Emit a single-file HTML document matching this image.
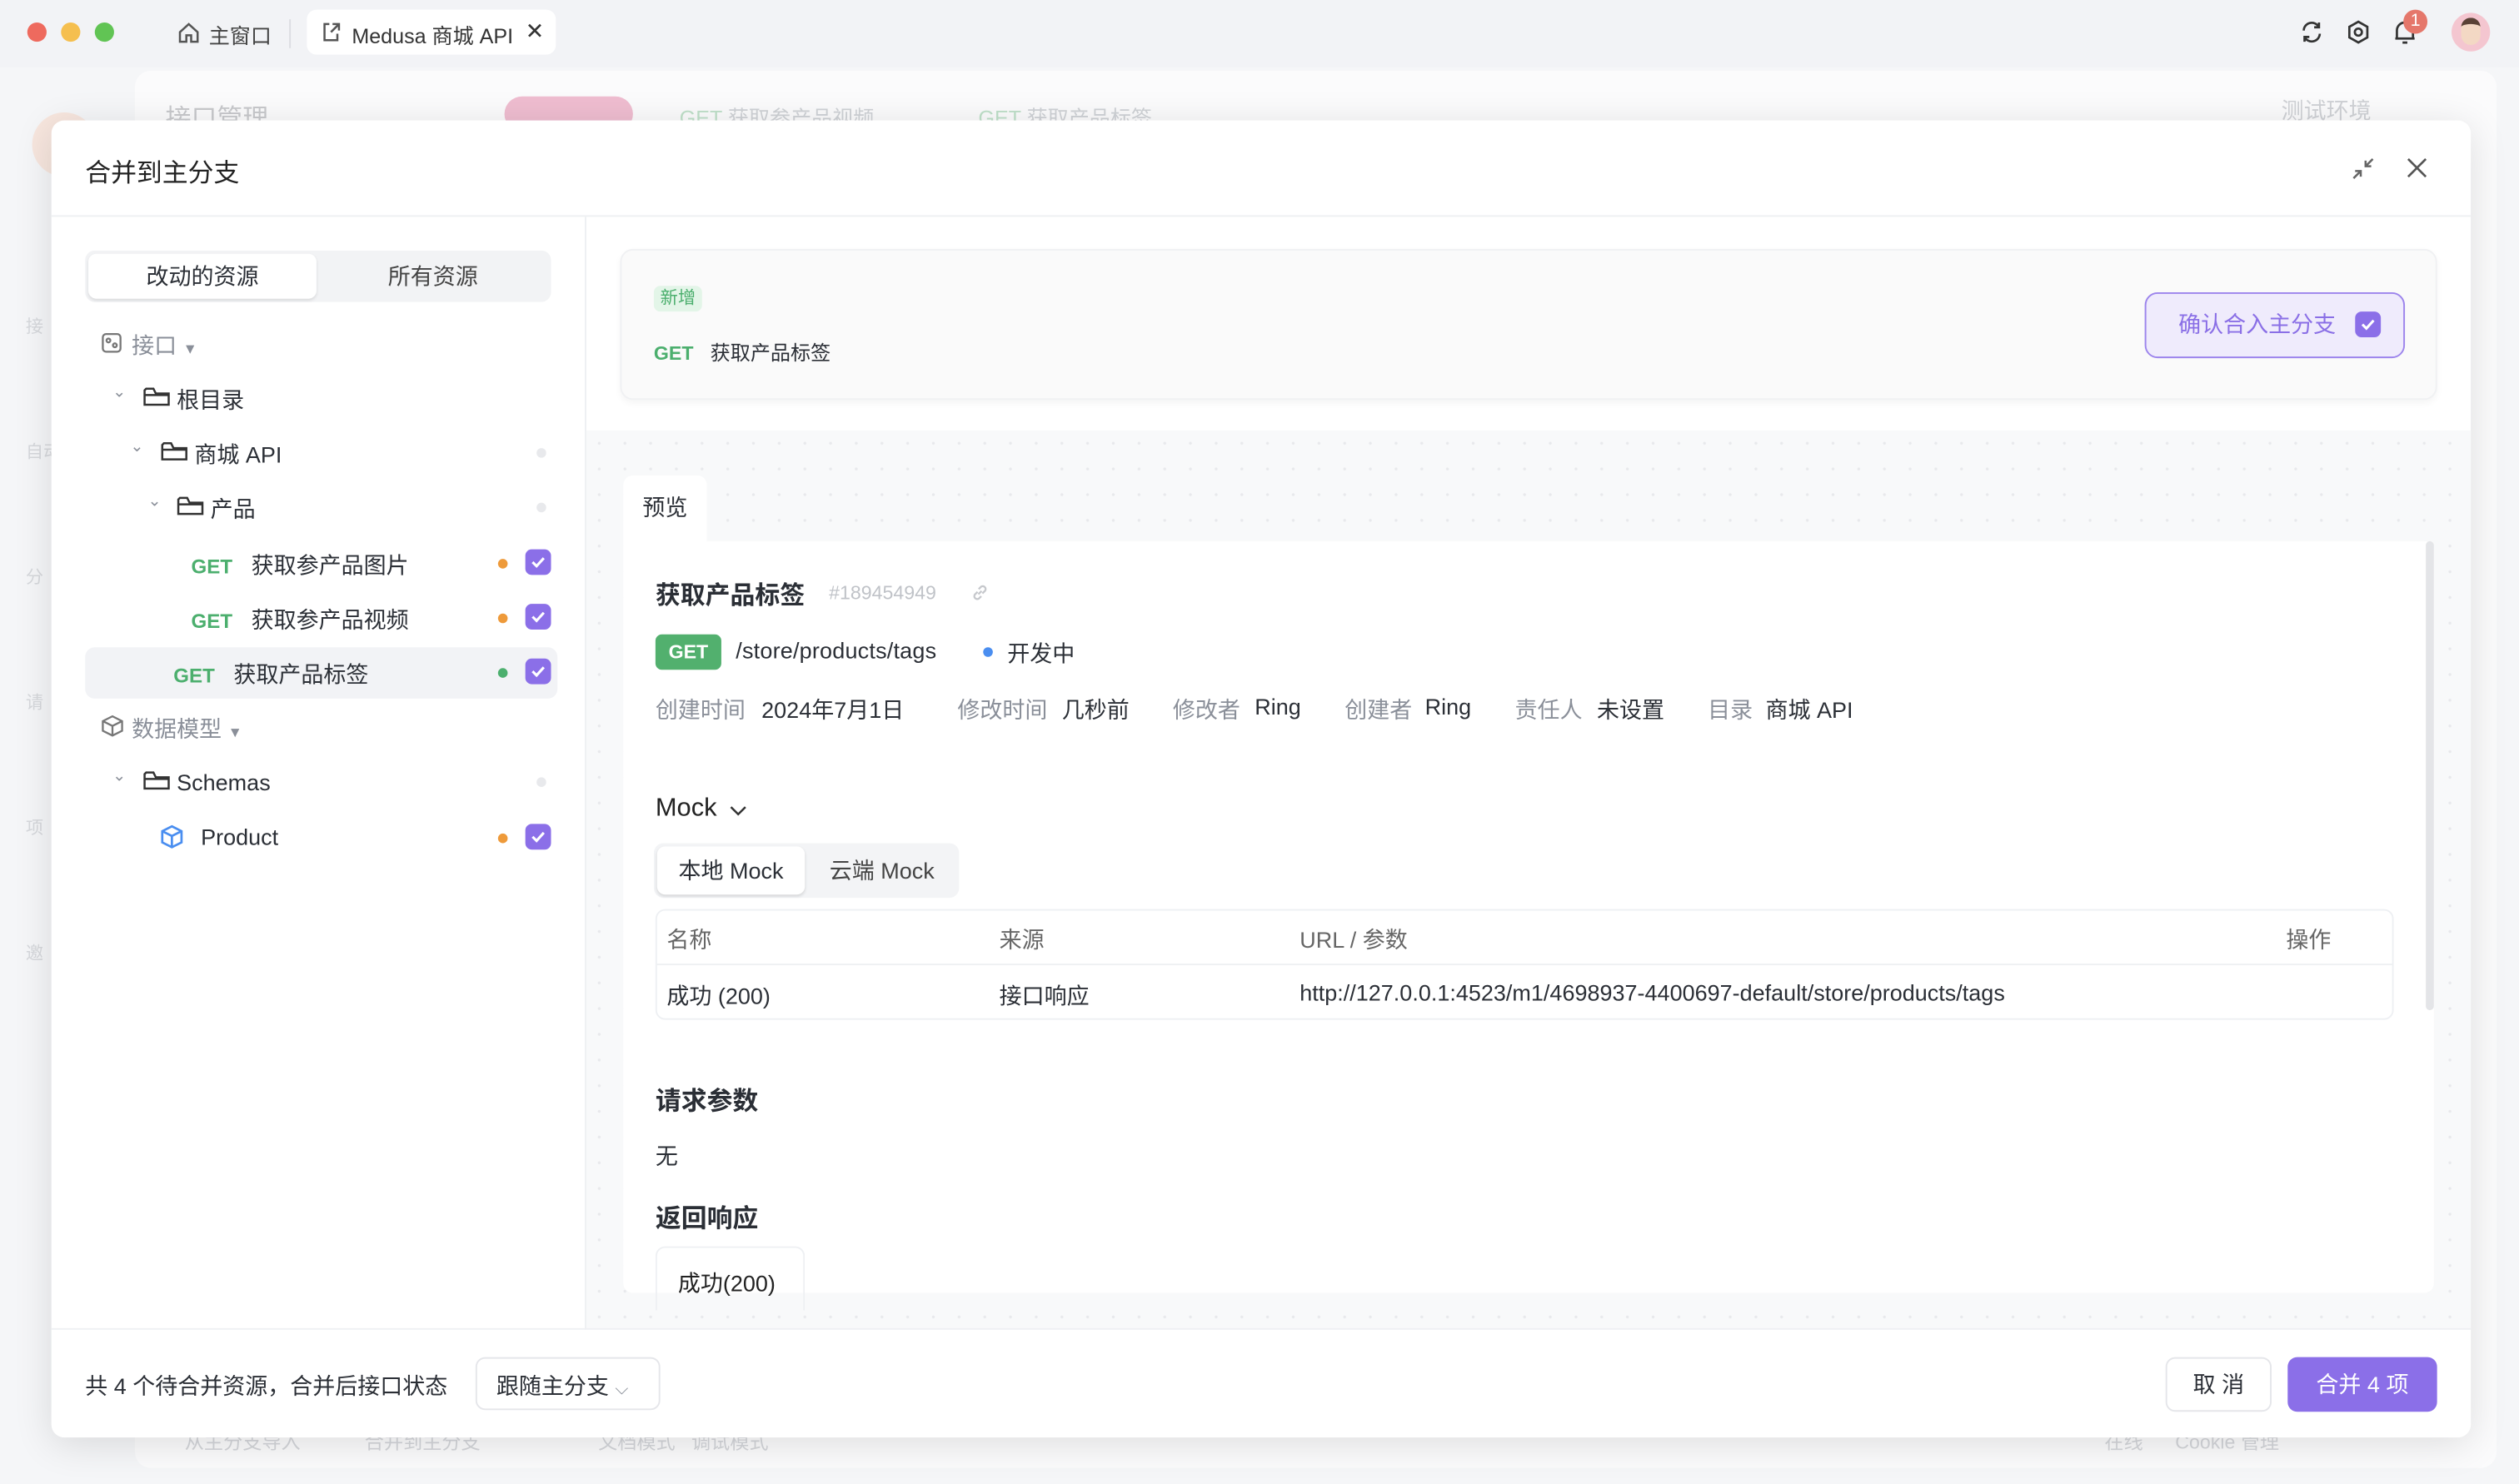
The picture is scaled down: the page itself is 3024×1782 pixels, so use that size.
<!DOCTYPE html>
<html><head><meta charset="utf-8">
<style>
*{box-sizing:border-box;margin:0;padding:0}
html,body{width:3024px;height:1782px;overflow:hidden;background:#f2f3f6}
#w{position:absolute;left:0;top:0;width:1568px;height:924px;transform:scale(1.92857);transform-origin:0 0;font-family:"Liberation Sans","Noto Sans CJK SC",sans-serif;color:#2b2f36;font-size:14px}
.a{position:absolute}
.get{color:#4caf6e;font-weight:bold;font-size:12.5px}
.cb{position:absolute;width:16px;height:16px;border-radius:4px;background:#8b6fe8}
.cb svg{position:absolute;left:3px;top:3px}
.dot{position:absolute;width:6px;height:6px;border-radius:3px}
.g{color:#8a8f99}
.m{position:absolute;top:0;white-space:nowrap}
</style></head><body><div id="w">
<!-- title bar -->
<div class="a" style="left:17px;top:14px;width:12px;height:12px;border-radius:6px;background:#ee6a5e"></div>
<div class="a" style="left:38px;top:14px;width:12px;height:12px;border-radius:6px;background:#f5bf4f"></div>
<div class="a" style="left:59px;top:14px;width:12px;height:12px;border-radius:6px;background:#61c454"></div>
<svg class="a" style="left:110px;top:13px" width="15" height="15" viewBox="0 0 15 15"><path d="M2 7L7.5 2L13 7V13H9V9H6V13H2Z" fill="none" stroke="#555" stroke-width="1.3"/></svg>
<div class="a" style="left:130px;top:12px;font-size:13px;color:#444">主窗口</div>
<div class="a" style="left:180px;top:12px;width:1px;height:18px;background:#dcdde2"></div>
<div class="a" style="left:191px;top:6px;width:155px;height:28px;background:#fff;border-radius:6px"></div>
<svg class="a" style="left:199px;top:13px" width="14" height="14" viewBox="0 0 14 14"><path d="M6 2H3V12H11V8M8 2H12V6M12 2L7 7" fill="none" stroke="#555" stroke-width="1.3"/></svg>
<div class="a" style="left:219px;top:12px;font-size:13px;color:#333">Medusa 商城 API</div>
<div class="a" style="left:327px;top:11px;font-size:14px;color:#333">✕</div>
<svg class="a" style="left:1431px;top:12px" width="16" height="16" viewBox="0 0 16 16" fill="none" stroke="#333" stroke-width="1.4"><path d="M3 7A5 5 0 0 1 12.5 5M13 9A5 5 0 0 1 3.5 11M12.5 2V5H9.5M3.5 14V11H6.5"/></svg>
<svg class="a" style="left:1460px;top:12px" width="16" height="16" viewBox="0 0 16 16" fill="none" stroke="#333" stroke-width="1.4"><path d="M8 1.5L13.6 4.7V11.3L8 14.5L2.4 11.3V4.7Z"/><circle cx="8" cy="8" r="2.2"/></svg>
<svg class="a" style="left:1489px;top:11px" width="16" height="18" viewBox="0 0 16 18" fill="none" stroke="#333" stroke-width="1.4"><path d="M3 13V8A5 5 0 0 1 13 8V13H2H14M6.5 15.5H9.5"/></svg>
<div class="a" style="left:1496px;top:6px;width:15px;height:15px;border-radius:8px;background:#e5776b;color:#fff;font-size:11px;text-align:center;line-height:15px">1</div>
<div class="a" style="left:1526px;top:8px;width:24px;height:24px;border-radius:12px;background:#f4c6d0"></div>
<div class="a" style="left:1532px;top:11px;width:12px;height:17px;border-radius:6px;background:#f3d8c4;border-top:4px solid #5a4236"></div>
<!-- background app faded -->
<div class="a" style="left:0;top:42px;width:1568px;height:882px;background:#f5f6f8"></div>
<div class="a" style="left:84px;top:44px;width:1470px;height:870px;background:#fbfbfc;border-radius:10px"></div>
<div class="a" style="left:103px;top:60px;font-size:16px;color:#c8c9cc">接口管理</div>
<div class="a" style="left:314px;top:60px;width:80px;height:22px;border-radius:11px;background:#efbdd0"></div>
<div class="a" style="left:423px;top:63px;font-size:13px;color:#cfd2d6"><span style="color:#bfe0c9">GET</span> 获取参产品视频</div>
<div class="a" style="left:609px;top:63px;font-size:13px;color:#cfd2d6"><span style="color:#bfe0c9">GET</span> 获取产品标签</div>
<div class="a" style="left:1420px;top:59px;font-size:14px;color:#d0d2d6">测试环境</div>
<div class="a" style="left:20px;top:70px;width:40px;height:40px;border-radius:20px;background:#f7e6de"></div>
<div class="a" style="left:16px;top:165px;font-size:11px;color:#d6d8dc;line-height:78px">接<br>自动<br>分<br>请<br>项<br>邀</div>
<div class="a" style="left:115px;top:889px;font-size:12px;color:#d4d6da">从主分支导入 &nbsp;&nbsp;&nbsp;&nbsp;&nbsp;&nbsp;&nbsp;&nbsp;&nbsp;&nbsp; 合并到主分支 &nbsp;&nbsp;&nbsp;&nbsp;&nbsp;&nbsp;&nbsp;&nbsp;&nbsp;&nbsp;&nbsp;&nbsp;&nbsp;&nbsp;&nbsp;&nbsp;&nbsp;&nbsp;&nbsp;&nbsp; 文档模式 &nbsp; 调试模式</div>
<div class="a" style="left:1310px;top:889px;font-size:12px;color:#d4d6da">在线 &nbsp;&nbsp;&nbsp;&nbsp; Cookie 管理</div>
<!-- modal -->
<div class="a" style="left:32px;top:75px;width:1506px;height:820px;background:#fff;border-radius:8px;box-shadow:0 4px 24px rgba(0,0,0,.12);overflow:hidden">
 <div class="a" style="left:21px;top:19px;font-size:16px;color:#222">合并到主分支</div>
 <svg class="a" style="left:1432px;top:23px" width="14" height="14" viewBox="0 0 14 14" fill="none" stroke="#666" stroke-width="1.3"><path d="M13 1L8.5 5.5M8.5 2V5.5H12M1 13L5.5 8.5M2 8.5H5.5V12"/></svg>
 <svg class="a" style="left:1466px;top:23px" width="13" height="13" viewBox="0 0 13 13" stroke="#555" stroke-width="1.4"><path d="M1 1L12 12M12 1L1 12"/></svg>
 <div class="a" style="left:0;top:59px;width:1506px;height:1px;background:#eef0f3"></div>
 <!-- left pane -->
 <div class="a" style="left:332px;top:60px;width:1px;height:693px;background:#eef0f3"></div>
 <div class="a" style="left:21px;top:81px;width:290px;height:32px;border-radius:6px;background:#f2f3f5"></div>
 <div class="a" style="left:23px;top:83px;width:142px;height:28px;border-radius:5px;background:#fff;box-shadow:0 1px 2px rgba(0,0,0,.1);text-align:center;line-height:28px">改动的资源</div>
 <div class="a" style="left:166px;top:83px;width:143px;height:28px;text-align:center;line-height:28px;color:#444">所有资源</div>
 <div class="a" style="left:21px;top:328px;width:294px;height:32px;border-radius:6px;background:#f2f3f6"></div>
 <svg class="a" style="left:31px;top:132px" width="13" height="13" viewBox="0 0 13 13" fill="none" stroke="#777" stroke-width="1.2"><rect x="1" y="1" width="11" height="11" rx="2"/><circle cx="4.5" cy="5" r="1.2"/><circle cx="8.5" cy="8" r="1.2"/></svg>
 <div class="a g" style="left:50px;top:130px">接口 <span style="font-size:9px">▼</span></div>
 <svg class="a" style="left:31px;top:370px" width="14" height="14" viewBox="0 0 14 14" fill="none" stroke="#777" stroke-width="1.2"><path d="M7 1L13 4V10L7 13L1 10V4ZM1 4L7 7L13 4M7 7V13"/></svg>
 <div class="a g" style="left:50px;top:369px">数据模型 <span style="font-size:9px">▼</span></div>
 <!-- folders -->
 <div class="a g" style="left:38px;top:164px;font-size:10px">⌄</div>
 <div class="a g" style="left:49px;top:198px;font-size:10px">⌄</div>
 <div class="a g" style="left:60px;top:232px;font-size:10px">⌄</div>
 <div class="a g" style="left:38px;top:403px;font-size:10px">⌄</div>
 <svg class="a" style="left:57px;top:165px" width="17" height="14" viewBox="0 0 17 14" fill="none" stroke="#333" stroke-width="1.3"><path d="M1 3V12H16V5H8L6.5 2H2ZM1 6H16"/></svg>
 <div class="a" style="left:78px;top:164px">根目录</div>
 <svg class="a" style="left:68px;top:199px" width="17" height="14" viewBox="0 0 17 14" fill="none" stroke="#333" stroke-width="1.3"><path d="M1 3V12H16V5H8L6.5 2H2ZM1 6H16"/></svg>
 <div class="a" style="left:89px;top:198px">商城 API</div>
 <svg class="a" style="left:78px;top:233px" width="17" height="14" viewBox="0 0 17 14" fill="none" stroke="#333" stroke-width="1.3"><path d="M1 3V12H16V5H8L6.5 2H2ZM1 6H16"/></svg>
 <div class="a" style="left:99px;top:232px">产品</div>
 <svg class="a" style="left:57px;top:404px" width="17" height="14" viewBox="0 0 17 14" fill="none" stroke="#333" stroke-width="1.3"><path d="M1 3V12H16V5H8L6.5 2H2ZM1 6H16"/></svg>
 <div class="a" style="left:78px;top:404px">Schemas</div>
 <div class="a" style="left:87px;top:267px"><span class="get">GET</span>&nbsp;&nbsp; 获取参产品图片</div>
 <div class="a" style="left:87px;top:301px"><span class="get">GET</span>&nbsp;&nbsp; 获取参产品视频</div>
 <div class="a" style="left:76px;top:335px"><span class="get">GET</span>&nbsp;&nbsp; 获取产品标签</div>
 <svg class="a" style="left:67px;top:438px" width="16" height="16" viewBox="0 0 16 16" fill="none" stroke="#4a8ef0" stroke-width="1.4"><path d="M8 1.5L14 4.5V11.5L8 14.5L2 11.5V4.5ZM2 4.5L8 7.5L14 4.5M8 7.5V14.5"/></svg>
 <div class="a" style="left:93px;top:438px">Product</div>
 <div class="dot" style="left:302px;top:204px;background:#e8e9ec"></div>
 <div class="dot" style="left:302px;top:238px;background:#e8e9ec"></div>
 <div class="dot" style="left:302px;top:409px;background:#e8e9ec"></div>
 <div class="dot" style="left:278px;top:273px;background:#ee9a3a"></div>
 <div class="dot" style="left:278px;top:307px;background:#ee9a3a"></div>
 <div class="dot" style="left:278px;top:341px;background:#4caf6e"></div>
 <div class="dot" style="left:278px;top:444px;background:#ee9a3a"></div>
 <div class="cb" style="left:295px;top:267px"><svg width="10" height="10" viewBox="0 0 10 10"><path d="M1.5 5L4 7.5L8.5 2.5" fill="none" stroke="#fff" stroke-width="1.6"/></svg></div>
 <div class="cb" style="left:295px;top:301px"><svg width="10" height="10" viewBox="0 0 10 10"><path d="M1.5 5L4 7.5L8.5 2.5" fill="none" stroke="#fff" stroke-width="1.6"/></svg></div>
 <div class="cb" style="left:295px;top:335px"><svg width="10" height="10" viewBox="0 0 10 10"><path d="M1.5 5L4 7.5L8.5 2.5" fill="none" stroke="#fff" stroke-width="1.6"/></svg></div>
 <div class="cb" style="left:295px;top:438px"><svg width="10" height="10" viewBox="0 0 10 10"><path d="M1.5 5L4 7.5L8.5 2.5" fill="none" stroke="#fff" stroke-width="1.6"/></svg></div>
 <!-- right pane -->
 <div class="a" style="left:354px;top:80px;width:1131px;height:94px;background:#fafafa;border:1px solid #f0f1f3;border-radius:8px;box-shadow:0 2px 4px rgba(0,0,0,.04)"></div>
 <div class="a" style="left:375px;top:103px;padding:0 4px;height:16px;line-height:16px;border-radius:4px;background:#e3f5e8;color:#4caf6e;font-size:11px">新增</div>
 <div class="a" style="left:375px;top:134px;font-size:12.5px"><span class="get" style="font-size:12px">GET</span>&nbsp;&nbsp; 获取产品标签</div>
 <div class="a" style="left:1303px;top:107px;width:162px;height:41px;border:1.5px solid #9c84ec;border-radius:8px;background:#efebfc;color:#8a6fe6;font-size:14px;line-height:38px;padding-left:20px">确认合入主分支</div>
 <div class="cb" style="left:1434px;top:119px"><svg width="10" height="10" viewBox="0 0 10 10"><path d="M1.5 5L4 7.5L8.5 2.5" fill="none" stroke="#fff" stroke-width="1.6"/></svg></div>
 <div class="a" style="left:333px;top:193px;width:1173px;height:560px;background:#f8f9fa;background-image:radial-gradient(#e8e9ec 0.8px,transparent 1px);background-size:16px 16px"></div>
 <div class="a" style="left:356px;top:221px;width:52px;height:42px;background:#fff;border-radius:6px 6px 0 0;text-align:center;line-height:40px;font-size:14px">预览</div>
 <div class="a" style="left:356px;top:262px;width:1127px;height:468px;background:#fff;border-radius:0 6px 6px 6px"></div>
 <div class="a" style="left:1478px;top:262px;width:5px;height:292px;background:#e4e5e8;border-radius:3px"></div>
 <div class="a" style="left:376px;top:284px;font-size:15.5px;font-weight:bold;color:#2b2f36">获取产品标签</div>
 <div class="a" style="left:484px;top:287px;font-size:12px;color:#c0c3c8">#189454949</div>
 <svg class="a" style="left:572px;top:288px" width="12" height="12" viewBox="0 0 12 12" fill="none" stroke="#c6c8cc" stroke-width="1.2"><path d="M5 7L7 5M4.5 5.5L2.8 7.2A1.8 1.8 0 0 0 5.3 9.7L6.8 8.2M7.5 6.5L9.2 4.8A1.8 1.8 0 0 0 6.7 2.3L5.2 3.8"/></svg>
 <div class="a" style="left:376px;top:320px;width:41px;height:22px;border-radius:4px;background:#52b06e;color:#fff;font-size:12px;font-weight:bold;text-align:center;line-height:22px">GET</div>
 <div class="a" style="left:426px;top:322px;font-size:14px;color:#2b2f36;letter-spacing:0.1px">/store/products/tags</div>
 <div class="dot" style="left:580px;top:328px;background:#4a8ef0"></div>
 <div class="a" style="left:595px;top:322px">开发中</div>
 <div class="a" style="left:0;top:357px;width:1200px;height:20px">
  <span class="m g" style="left:376px">创建时间</span><span class="m" style="left:442px">2024年7月1日</span>
  <span class="m g" style="left:564px">修改时间</span><span class="m" style="left:629px">几秒前</span>
  <span class="m g" style="left:698px">修改者</span><span class="m" style="left:749px">Ring</span>
  <span class="m g" style="left:805px">创建者</span><span class="m" style="left:855px">Ring</span>
  <span class="m g" style="left:911px">责任人</span><span class="m" style="left:962px">未设置</span>
  <span class="m g" style="left:1031px">目录</span><span class="m" style="left:1067px">商城 API</span>
 </div>
 <div class="a" style="left:376px;top:420px;font-size:16px;color:#222">Mock</div>
 <svg class="a" style="left:422px;top:426px" width="11" height="8" viewBox="0 0 11 8" fill="none" stroke="#333" stroke-width="1.3"><path d="M1 1.5L5.5 6L10 1.5"/></svg>
 <div class="a" style="left:375px;top:450px;width:190px;height:34px;border-radius:6px;background:#f3f4f6"></div>
 <div class="a" style="left:377px;top:452px;width:92px;height:30px;border-radius:5px;background:#fff;box-shadow:0 1px 2px rgba(0,0,0,.12);text-align:center;line-height:30px">本地 Mock</div>
 <div class="a" style="left:471px;top:452px;width:92px;height:30px;text-align:center;line-height:30px;color:#444">云端 Mock</div>
 <div class="a" style="left:376px;top:491px;width:1082px;height:69px;border:1px solid #eef0f3;border-radius:6px"></div>
 <div class="a" style="left:377px;top:525px;width:1080px;height:1px;background:#eef0f3"></div>
 <div class="a g" style="left:383px;top:500px;color:#666">名称</div>
 <div class="a g" style="left:590px;top:500px;color:#666">来源</div>
 <div class="a g" style="left:777px;top:500px;color:#666">URL / 参数</div>
 <div class="a g" style="left:1391px;top:500px;color:#666">操作</div>
 <div class="a" style="left:383px;top:535px">成功 (200)</div>
 <div class="a" style="left:590px;top:535px">接口响应</div>
 <div class="a" style="left:777px;top:535px">http://127.0.0.1:4523/m1/4698937-4400697-default/store/products/tags</div>
 <div class="a" style="left:376px;top:597px;font-size:16px;font-weight:bold;color:#2b2f36">请求参数</div>
 <div class="a" style="left:376px;top:635px">无</div>
 <div class="a" style="left:376px;top:670px;font-size:16px;font-weight:bold;color:#2b2f36">返回响应</div>
 <div class="a" style="left:376px;top:701px;width:93px;height:40px;border:1px solid #eef0f3;border-bottom:none;border-radius:6px 6px 0 0;padding:12px 0 0 13px;font-size:14px;color:#222">成功(200)</div>
 <!-- footer -->
 <div class="a" style="left:0;top:752px;width:1506px;height:1px;background:#eef0f3"></div>
 <div class="a" style="left:0;top:753px;width:1506px;height:67px;background:#fff"></div>
 <div class="a" style="left:21px;top:778px">共 4 个待合并资源，合并后接口状态</div>
 <div class="a" style="left:264px;top:770px;width:115px;height:33px;border:1px solid #e5e6ea;border-radius:6px;padding:7px 0 0 12px">跟随主分支 <span class="g" style="font-size:11px">⌵</span></div>
 <div class="a" style="left:1316px;top:770px;width:66px;height:34px;border:1px solid #e5e6ea;border-radius:6px;text-align:center;line-height:32px">取 消</div>
 <div class="a" style="left:1392px;top:770px;width:93px;height:34px;border-radius:6px;background:#8b6fe8;color:#fff;text-align:center;line-height:34px">合并 4 项</div>
</div>
</div></body></html>
